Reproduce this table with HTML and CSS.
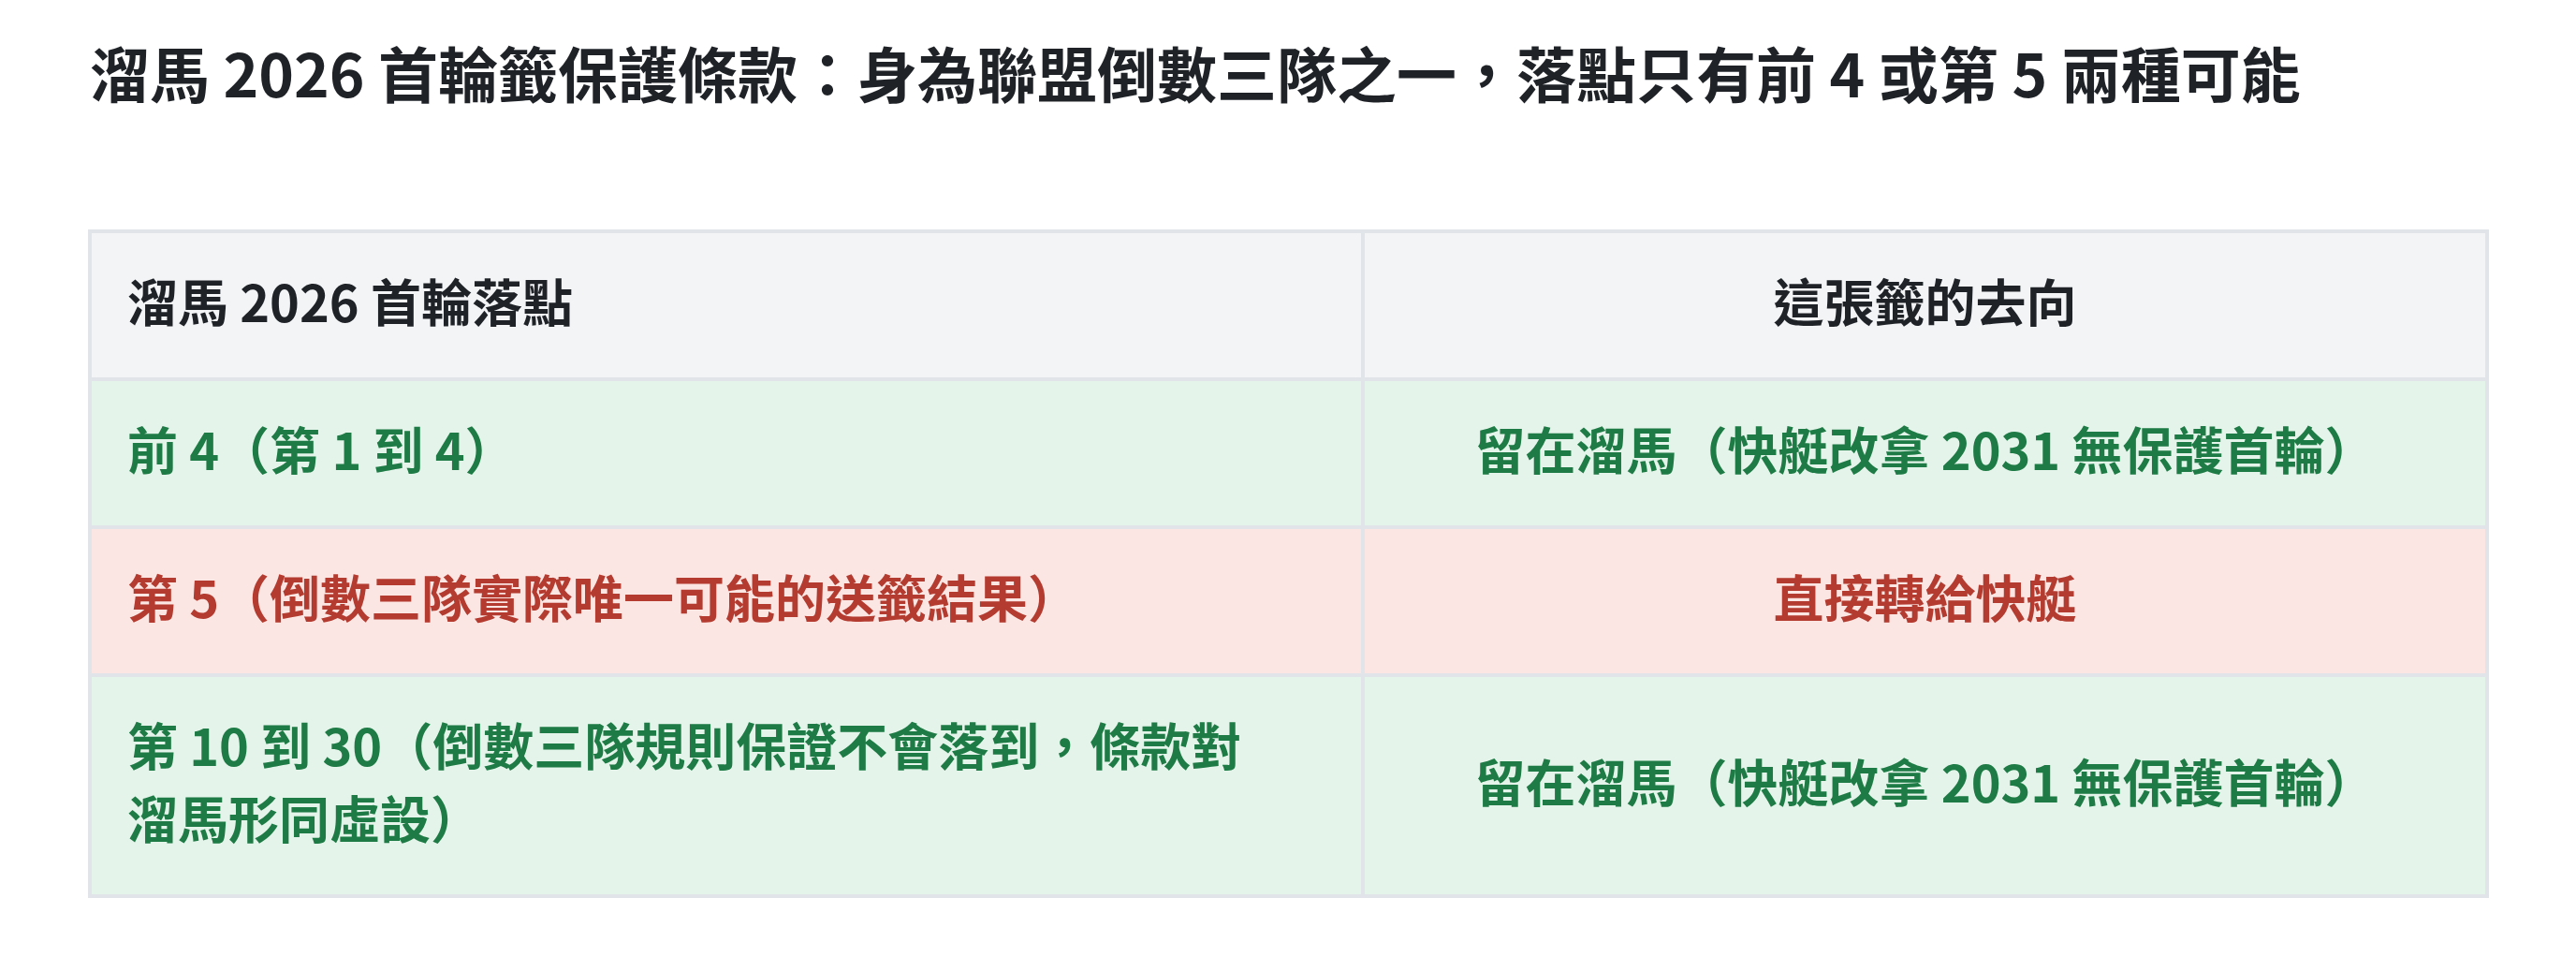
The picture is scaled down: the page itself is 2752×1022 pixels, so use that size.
FILE: index.html
```html
<!DOCTYPE html>
<html lang="zh-Hant">
<head>
<meta charset="utf-8">
<title>溜馬 2026 首輪籤保護條款</title>
<link rel="stylesheet" href="styles.css">
</head>
<body>
<main class="page">
  <h1 class="title">溜馬 2026 首輪籤保護條款：身為聯盟倒數三隊之一，落點只有前 4 或第 5 兩種可能</h1>
  <table class="pick-table">
    <colgroup>
      <col class="col-landing">
      <col class="col-fate">
    </colgroup>
    <thead>
      <tr>
        <th class="cell-left">溜馬 2026 首輪落點</th>
        <th class="cell-center">這張籤的去向</th>
      </tr>
    </thead>
    <tbody>
      <tr class="row-keep">
        <td class="cell-left">前 4（第 1 到 4）</td>
        <td class="cell-center">留在溜馬（快艇改拿 2031 無保護首輪）</td>
      </tr>
      <tr class="row-convey">
        <td class="cell-left">第 5（倒數三隊實際唯一可能的送籤結果）</td>
        <td class="cell-center">直接轉給快艇</td>
      </tr>
      <tr class="row-keep">
        <td class="cell-left">第 10 到 30（倒數三隊規則保證不會落到，條款對<br>溜馬形同虛設）</td>
        <td class="cell-center">留在溜馬（快艇改拿 2031 無保護首輪）</td>
      </tr>
    </tbody>
  </table>
</main>
</body>
</html>
```

FILE: styles.css
```css
html, body {
  margin: 0;
  padding: 0;
  background: #ffffff;
}

body {
  font-family: "Noto Sans CJK TC", "Noto Sans CJK SC", "Noto Sans", sans-serif;
  color: #1f2328;
}

.page {
  padding: 31px 96px 40px 94px;
}

.title {
  margin: 0 0 124px 2px;
  font-size: 64px;
  line-height: 90px;
  font-weight: 700;
  color: #1f2328;
}

.pick-table {
  width: 2561px;
  border-collapse: collapse;
  table-layout: fixed;
  font-size: 54px;
  line-height: 78px;
  font-weight: 700;
}

.col-landing {
  width: 1360px;
}

.col-fate {
  width: 1201px;
}

.pick-table th,
.pick-table td {
  border: 4px solid #e1e4e8;
  padding: 33px 38px 43px 38px;
  vertical-align: middle;
}

.pick-table th {
  background: #f3f4f6;
  color: #1f2328;
}

.cell-left {
  text-align: left;
}

.cell-center {
  text-align: center;
}

.row-keep td {
  background: #e4f4ea;
  color: #1e7b45;
}

.row-convey td {
  background: #fbe6e4;
  color: #b33b2f;
}
```
